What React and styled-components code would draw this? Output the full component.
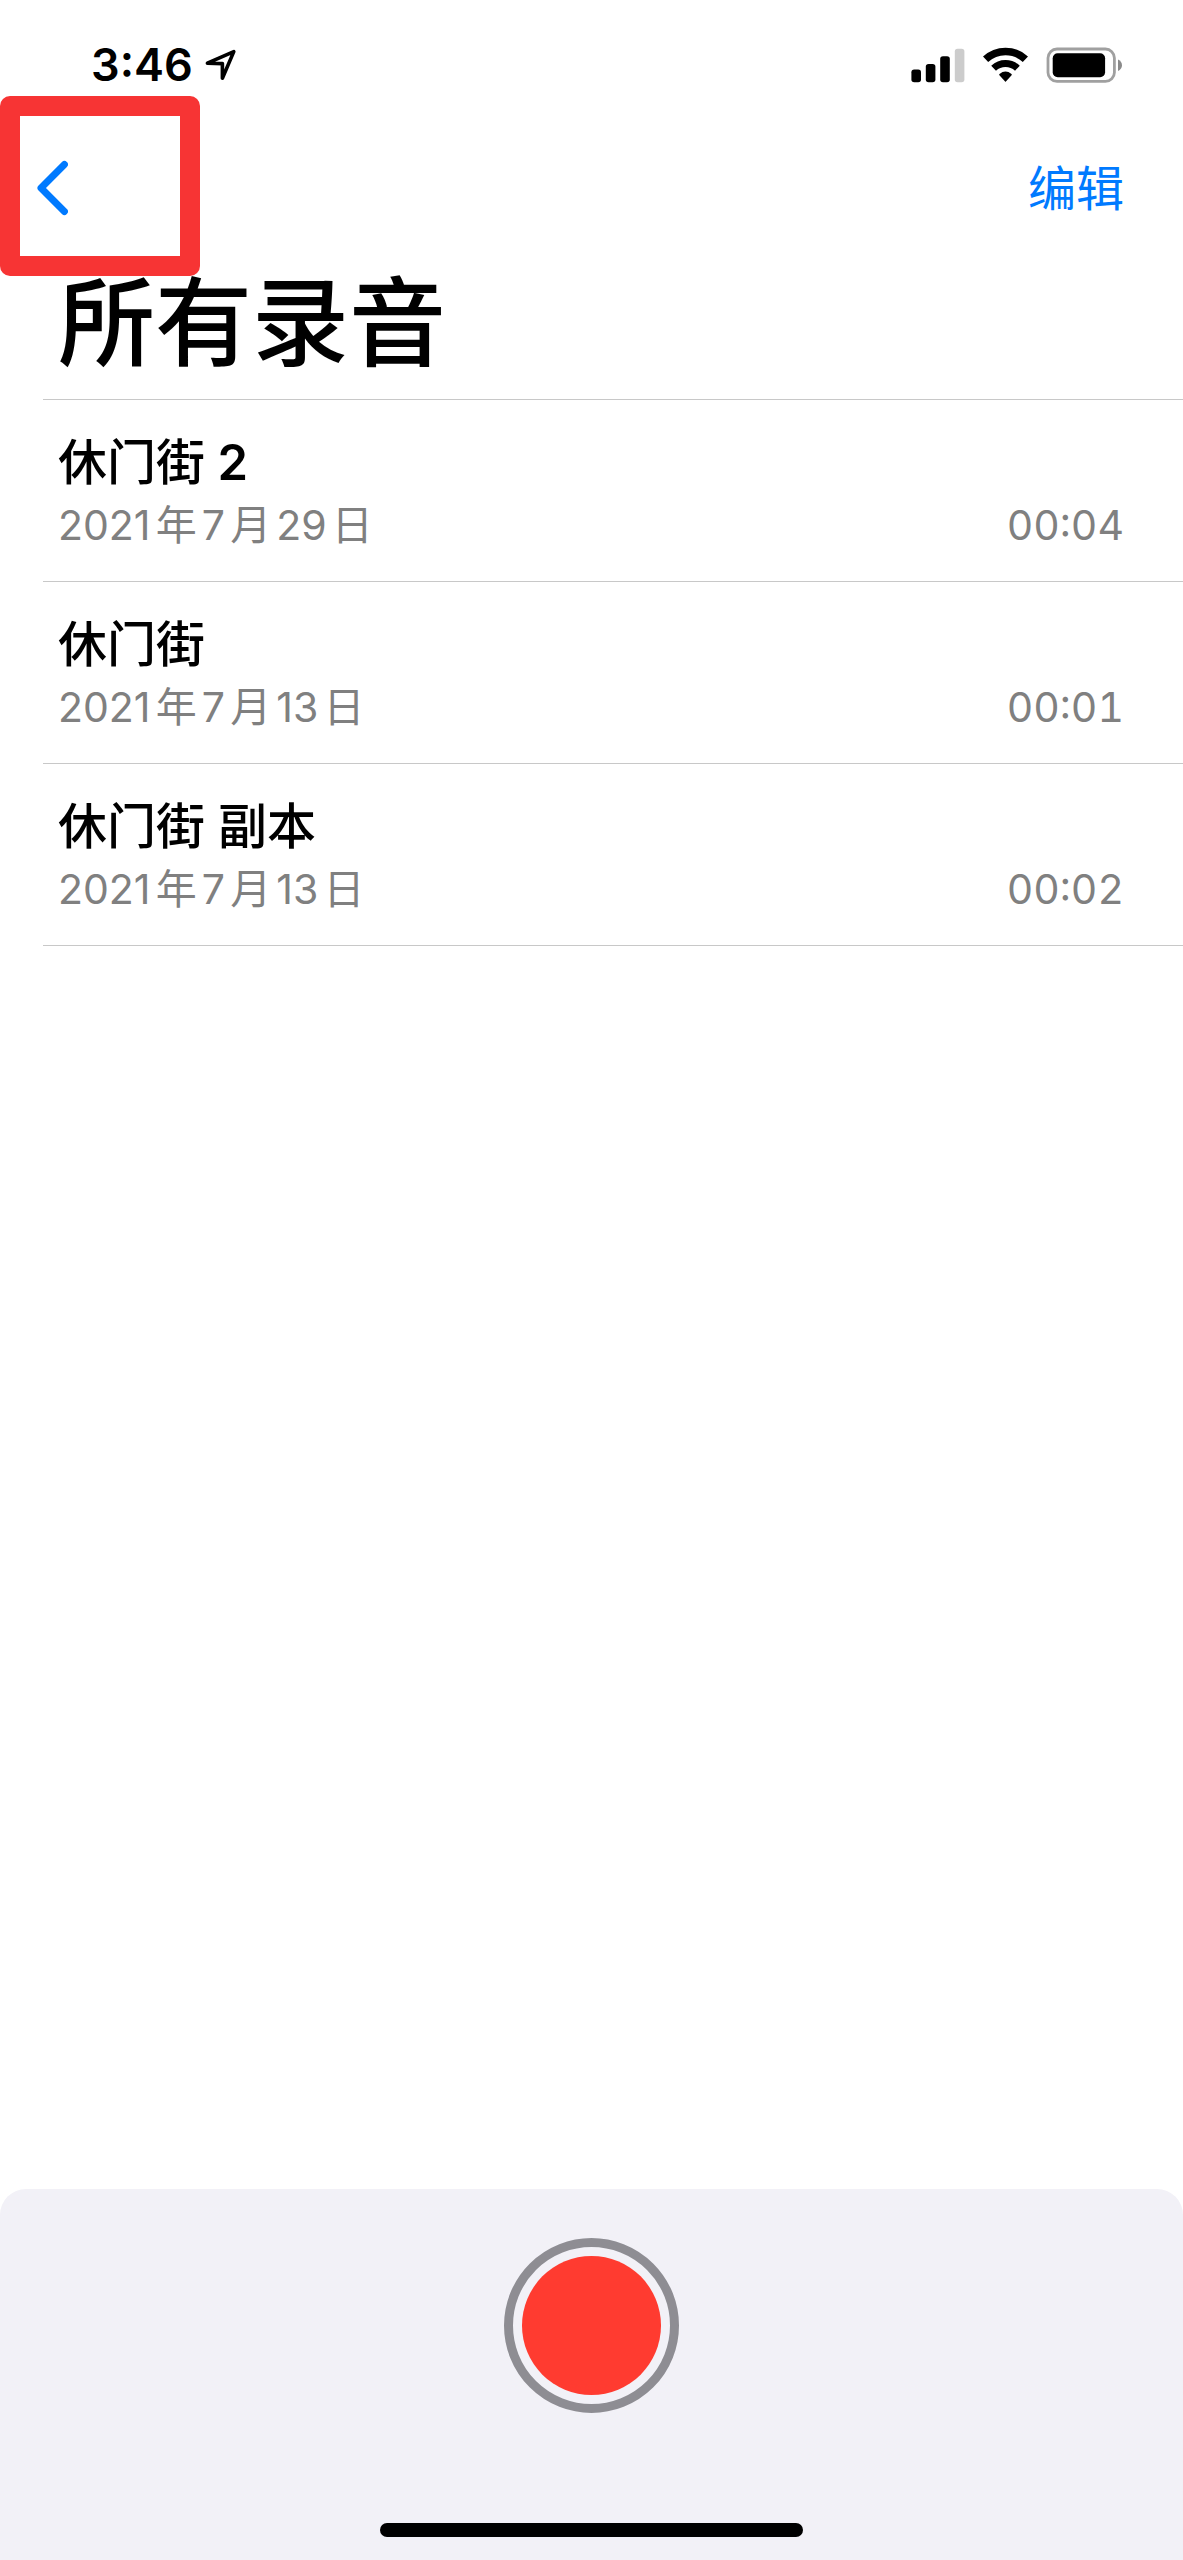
import React from "react";
import styled, { createGlobalStyle } from "styled-components";

const recordings = [
  { id: 1, name: "休门街", take: 2, date: "2021年7月29日", length: "00:04" },
  { id: 2, name: "休门街", date: "2021年7月13日", length: "00:01" },
  { id: 3, name: "休门街 副本", date: "2021年7月13日", length: "00:02" },
];

function LocationIcon() {
  return (
    <svg width='32' height='32' viewBox='0 0 32 32' aria-hidden='true'>
      <path
        d='M2.4 14.2 28.8 2.6 17.4 29.2 V14.6 Z'
        fill='none'
        stroke='#000'
        strokeWidth='3.6'
        strokeLinejoin='round'
      />
    </svg>
  );
}

function SignalIcon() {
  return (
    <svg width='54' height='36' viewBox='0 0 54 36' aria-hidden='true'>
      <rect x='0.4' y='22.5' width='9.6' height='12.8' rx='2.8' />
      <rect x='14.8' y='17' width='9.6' height='18.3' rx='2.8' />
      <rect x='29.2' y='9.3' width='9.6' height='26' rx='2.8' />
      <rect x='43.8' y='1.8' width='9.6' height='33.5' rx='2.8' fill='#ccc' />
    </svg>
  );
}

function WifiIcon() {
  return (
    <svg width='45' height='36' viewBox='0 0 45 36' aria-hidden='true'>
      <g fill='none' stroke='#000'>
        <path d='M2.6 12.3 A29.2 29.2 0 0 1 42.4 12.3' strokeWidth='7.6' />
        <path d='M10.6 21.2 A17.5 17.5 0 0 1 34.4 21.2' strokeWidth='7' />
      </g>
      <path
        d='M17 27.6 Q22.5 23.2 28 27.6 L22.5 33.8 Z'
        stroke='#000'
        strokeWidth='1.6'
        strokeLinejoin='round'
      />
    </svg>
  );
}

function BatteryIcon() {
  return (
    <svg width='76' height='36' viewBox='0 0 76 36' aria-hidden='true'>
      <rect
        x='2'
        y='2'
        width='66.4'
        height='32.4'
        rx='9'
        fill='none'
        stroke='#a0a0a0'
        strokeWidth='2.8'
      />
      <rect x='6.7' y='6.2' width='52.4' height='24' rx='5' />
      <path d='M72 12.4 Q76 14.4 76 18.2 Q76 22 72 24 Z' fill='#8a8a8a' />
    </svg>
  );
}

function ChevronIcon() {
  return (
    <svg width='32' height='56' viewBox='0 0 32 56' aria-hidden='true'>
      <path
        d='M28.4 4.5 5 28 28.4 51.5'
        fill='none'
        stroke='#007aff'
        strokeWidth='7'
        strokeLinecap='round'
        strokeLinejoin='round'
      />
    </svg>
  );
}

function Recording(props) {
  const { name, take, date, length } = props;

  return (
    <Row>
      <Name>
        {name}
        {take && <Take> {take}</Take>}
      </Name>
      <Details>
        <span>{date}</span>
        <Length>{length}</Length>
      </Details>
    </Row>
  );
}

export default function App() {
  return (
    <Screen>
      <GlobalStyle />
      <StatusBar>
        <Clock>
          3:46
          <LocationIcon />
        </Clock>
        <StatusIcons>
          <SignalIcon />
          <WifiIcon />
          <BatteryIcon />
        </StatusIcons>
      </StatusBar>
      <NavBar>
        <BackButton type='button' aria-label='返回'>
          <ChevronIcon />
        </BackButton>
        <EditButton type='button'>编辑</EditButton>
      </NavBar>
      <Title>所有录音</Title>
      <List>
        {recordings.map((item) => (
          <Recording key={item.id} {...item} />
        ))}
      </List>
      <Recorder>
        <RecordButton type='button' aria-label='录音' />
        <HomeIndicator />
      </Recorder>
    </Screen>
  );
}

const GlobalStyle = createGlobalStyle`
  * {
    box-sizing: border-box;
  }
  body {
    margin: 0;
    background-color: #fff;
    color: #000;
    font-family: Inter, "Noto Sans CJK SC", sans-serif;
  }
  button {
    padding: 0;
    border: 0;
    background: none;
    font-family: inherit;
  }
  svg {
    display: block;
    flex: none;
  }
`;
const Screen = styled.main`
  display: flex;
  flex-direction: column;
  min-height: 100vh;
`;
const StatusBar = styled.header`
  display: flex;
  justify-content: space-between;
  align-items: center;
  height: 96px;
  padding: 33px 61px 0 91px;
`;
const Clock = styled.div`
  display: flex;
  align-items: center;
  gap: 12px;
  font-size: 45px;
  font-weight: 600;
  line-height: 48px;
`;
const StatusIcons = styled.div`
  display: flex;
  align-items: center;
  gap: 18px;
`;
const NavBar = styled.nav`
  display: flex;
  justify-content: space-between;
  align-items: center;
  padding-right: 59px;
`;
const BackButton = styled.button`
  display: flex;
  align-items: center;
  width: 200px;
  height: 180px;
  padding: 4px 0 0 16px;
  border: 20px solid #f73434;
  border-radius: 10px;
`;
const EditButton = styled.button`
  padding-top: 6px;
  color: #007aff;
  font-size: 48px;
  line-height: 64px;
`;
const Title = styled.h1`
  margin: 0;
  padding: 3px 58px 32px;
  font-size: 97px;
  font-weight: 500;
  line-height: 88px;
`;
const List = styled.ul`
  flex: 1;
  margin: 0 0 0 43px;
  padding: 0;
  border-top: 1px solid #c8c8c8;
  list-style: none;
`;
const Row = styled.li`
  padding: 31px 59px 26px 15px;
  border-bottom: 1px solid #c8c8c8;
`;
const Name = styled.div`
  font-size: 49px;
  font-weight: 500;
  line-height: 64px;
`;
const Take = styled.span`
  font-weight: 600;
`;
const Details = styled.div`
  display: flex;
  justify-content: space-between;
  color: #808080;
  font-size: 41px;
  line-height: 60px;
  text-autospace: normal;
`;
const Length = styled.span`
  font-variant-numeric: tabular-nums;
`;
const Recorder = styled.footer`
  display: flex;
  flex-direction: column;
  align-items: center;
  padding: 49px 0 23px;
  border-radius: 26px 26px 0 0;
  background-color: #f2f1f7;
`;
const RecordButton = styled.button`
  width: 175px;
  height: 175px;
  padding: 9px;
  border: 9px solid #8e8d93;
  border-radius: 50%;
  background-color: #ff3b30;
  background-clip: content-box;
`;
const HomeIndicator = styled.div`
  width: 423px;
  height: 14px;
  margin-top: 110px;
  border-radius: 7px;
  background-color: #000;
`;
